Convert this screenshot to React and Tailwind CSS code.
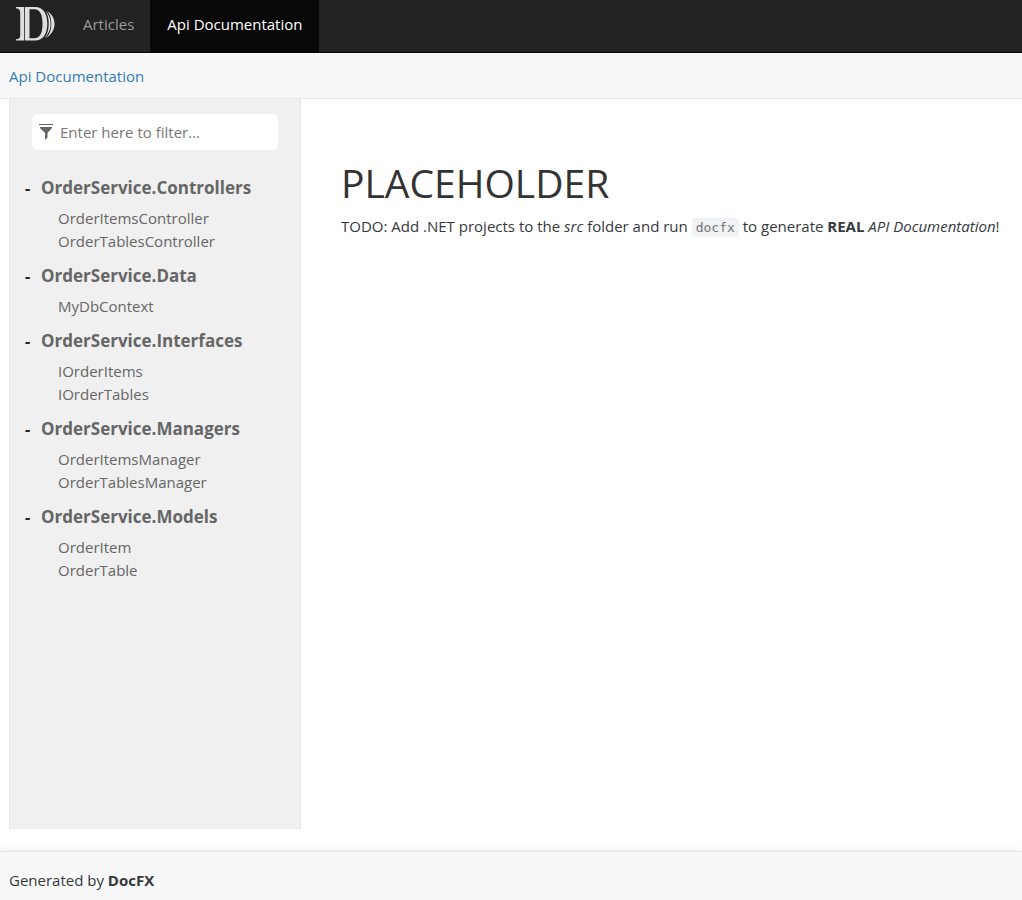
import { useState } from "react";

const namespaces = [
  { name: "OrderService.Controllers", items: ["OrderItemsController", "OrderTablesController"] },
  { name: "OrderService.Data", items: ["MyDbContext"] },
  { name: "OrderService.Interfaces", items: ["IOrderItems", "IOrderTables"] },
  { name: "OrderService.Managers", items: ["OrderItemsManager", "OrderTablesManager"] },
  { name: "OrderService.Models", items: ["OrderItem", "OrderTable"] },
];

function Logo() {
  return (
    <svg viewBox="0 0 40 36" className="h-9 w-10" fill="#dedede" aria-hidden="true">
      <path d="M1 1H9.200V34.500H1V33.300C4 33 5.200 32 5.200 29.500V6.500C5.200 4 4 2.600 1 2.300Z" />
      <path
        fillRule="evenodd"
        d="M10 1H20C28.500 1 32.300 8 32.300 17.700S28.500 34.500 20 34.500H10ZM14.500 3.200V32.300H19C25.300 32.300 27.500 26.500 27.500 17.700S25.300 3.200 19 3.200Z"
      />
      <path d="M30.500 5C34 8.500 35.600 12.500 35.600 17.700S33.500 28.500 29.500 32C32.500 28 33.700 23.500 33.700 17.700S32.700 9 30.500 5Z" />
      <path d="M32 5C37 8 39.500 12.500 39.500 17.700S37 28.500 31 32C35 28 36.300 23.500 36.300 17.700S35.200 9 32 5Z" />
    </svg>
  );
}

function FilterIcon() {
  return (
    <svg viewBox="0 0 14 16" className="h-4 w-3.5 shrink-0" fill="#666666" aria-hidden="true">
      <path d="M0 0H14V1H0ZM1 3H13V4L8.500 9V13.500L6 16V9L1 4Z" />
    </svg>
  );
}

function Namespace({ name, items }) {
  const [open, setOpen] = useState(true);
  return (
    <li className="mb-2.5">
      <div className="flex h-[26px] items-center">
        <button
          type="button"
          aria-label={"Toggle " + name}
          onClick={() => setOpen(!open)}
          className="w-4 text-left text-[16px] leading-6 font-bold text-[#222222]"
        >
          {open ? "-" : "+"}
        </button>
        <a href="#" className="text-[17px] font-bold text-[#666666]">{name}</a>
      </div>
      {open && (
        <ul className="mt-1.5 pl-[33px]">
          {items.map((item) => (
            <li key={item} className="flex h-[23px] items-center text-[15px]">
              <a href="#" className="text-[#666666]">{item}</a>
            </li>
          ))}
        </ul>
      )}
    </li>
  );
}

export default function App() {
  const [query, setQuery] = useState("");
  const groups = namespaces
    .map((g) => ({ ...g, items: g.items.filter((i) => i.toLowerCase().includes(query.toLowerCase())) }))
    .filter((g) => g.items.length > 0);

  return (
    <div className="flex min-h-screen flex-col bg-white font-['Segoe_UI','Open_Sans',sans-serif] text-[15px] text-[#34393e]">
      <header>
        <nav className="flex h-[53px] border-b border-[#080808] bg-[#222222]">
          <a href="#" aria-label="Home" className="flex items-center pr-3 pl-[15px] pb-1">
            <Logo />
          </a>
          <a href="#" className="flex items-center px-4 pb-1 text-[#9d9d9d]">Articles</a>
          <a href="#" className="flex items-center bg-[#080808] px-[17px] pb-1 text-white">Api Documentation</a>
        </nav>
        <div className="flex h-[46px] items-center border-b border-[#e7e7e7] bg-[#f8f8f8] px-[9px] pt-0.5">
          <a href="#" className="text-[#337ab7]">Api Documentation</a>
        </div>
      </header>

      <div className="flex flex-1 pl-[9px]">
        <aside className="mb-[22px] w-[292px] shrink-0 border-x border-[#e7e7e7] bg-[#f0f0f0] pt-[15px]">
          <label className="mx-[22px] flex h-9 items-center gap-[7px] rounded-md bg-white px-[7px]">
            <FilterIcon />
            <input
              type="text"
              aria-label="Filter"
              placeholder="Enter here to filter..."
              value={query}
              onChange={(e) => setQuery(e.target.value)}
              className="min-w-0 flex-1 bg-transparent text-[15px] text-[#555555] outline-none placeholder:text-[#777777]"
            />
          </label>
          <ul className="mt-[25px] pl-[15px]">
            {groups.map((g) => (
              <Namespace key={g.name} name={g.name} items={g.items} />
            ))}
          </ul>
        </aside>
        <main className="min-w-0 flex-1 pt-[59px] pl-10">
          <h1 className="text-[39px] leading-[50px] text-[#333333]">PLACEHOLDER</h1>
          <p className="mt-1.5 leading-6">
            TODO: Add .NET projects to the <em>src</em> folder and run{" "}
            <code className="rounded bg-[#f0f2f4] px-1 py-0.5 font-['DejaVu_Sans_Mono',monospace] text-[13px] text-[#717374]">docfx</code>{" "}
            to generate <strong>REAL</strong> <em>API Documentation</em>!
          </p>
        </main>
      </div>

      <footer className="flex h-[49px] items-center border-t border-[#e7e7e7] bg-[#f8f8f8] px-[9px] pt-2 shadow-[0_0_6px_rgba(0,0,0,0.12)]">
        <span>Generated by <strong>DocFX</strong></span>
      </footer>
    </div>
  );
}
